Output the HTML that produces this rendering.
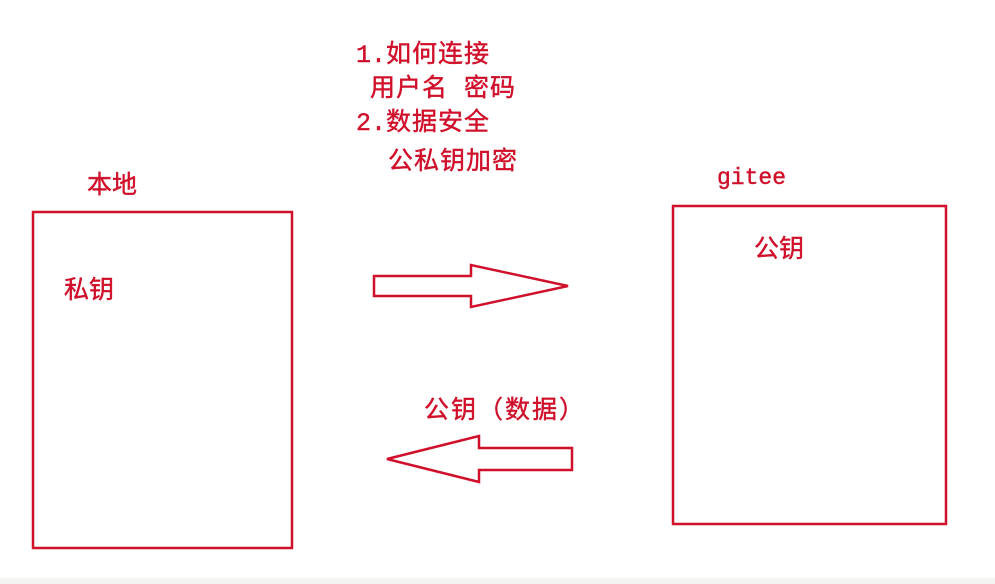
<!DOCTYPE html>
<html><head><meta charset="utf-8"><style>
body{margin:0;width:995px;height:584px;background:#fff;position:relative;overflow:hidden;font-family:"Liberation Sans","Noto Sans CJK SC",sans-serif;}
.t{position:absolute;color:#d0102a;font-size:25px;line-height:1;white-space:nowrap;font-family:"Liberation Mono","Noto Sans CJK SC",sans-serif;font-weight:400;-webkit-text-stroke:0.4px #d0102a;}
.bot{position:absolute;left:0;top:578px;width:995px;height:6px;background:#f4f4f2;}
</style></head><body>
<svg width="995" height="584" style="position:absolute;left:0;top:0">
<rect x="33" y="212" width="259" height="336" fill="none" stroke="#d0102a" stroke-width="2.5"/>
<rect x="673" y="206" width="273" height="318" fill="none" stroke="#d0102a" stroke-width="2.5"/>
<polygon points="374,276 471,276 471,265 568,286 471,307 471,296 374,296" fill="none" stroke="#d0102a" stroke-width="2.5"/>
<polygon points="572,448 479,448 479,436 387,459 479,482 479,470 572,470" fill="none" stroke="#d0102a" stroke-width="2.5"/>
</svg>
<div class="t" style="left:356px;top:43px">1.<span style="letter-spacing:1px">如何连接</span></div>
<div class="t" style="left:370px;top:77px;letter-spacing:1px">用户名 密码</div>
<div class="t" style="left:356px;top:111px">2.<span style="letter-spacing:1px">数据安全</span></div>
<div class="t" style="left:388px;top:150px;letter-spacing:1px">公私钥加密</div>
<div class="t" style="left:87px;top:174px">本地</div>
<div class="t" style="left:717px;top:167px;font-size:23px">gitee</div>
<div class="t" style="left:64px;top:279px">私钥</div>
<div class="t" style="left:754px;top:238px">公钥</div>
<div class="t" style="left:424px;top:399px;letter-spacing:2px">公钥（数据）</div>
<div class="bot"></div>
</body></html>
